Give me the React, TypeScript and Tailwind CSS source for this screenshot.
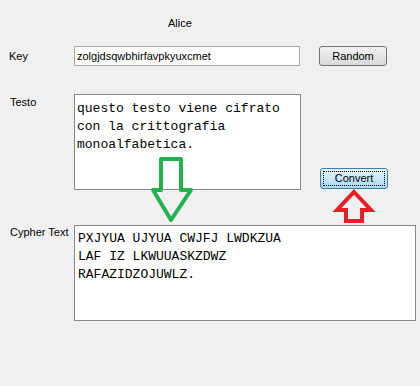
export default function App() {
  return (
    <div className="relative w-[420px] h-[386px] bg-[#f0f0f0] text-[11px] leading-[13px] text-black font-['Liberation_Sans',Arial,sans-serif] overflow-hidden">
      <div className="pt-[17px] pl-[168px] h-[46px]">Alice</div>

      {/* key row */}
      <div className="flex items-center h-[20px]">
        <div className="w-[74px] pl-[9px] pt-[1px]">Key</div>
        <div className="w-[226px] h-[20px] border border-[#a9a9a9] bg-white pl-[2px] leading-[18px]">
          zolgjdsqwbhirfavpkyuxcmet
        </div>
        <button className="ml-[19px] w-[68px] h-[20px] rounded-[3px] border border-[#707070] bg-gradient-to-b from-[#f2f2f2] to-[#d9d9d9] text-[11px] leading-[18px]">
          Random
        </button>
      </div>

      {/* testo row */}
      <div className="flex mt-[28px]">
        <div className="w-[74px] pl-[10px] pt-[2px]">Testo</div>
        <div className="w-[227px] h-[96px] border border-[#828790] bg-white pl-[2px] pt-[5px] font-['Liberation_Mono','Courier_New',monospace] text-[13px] leading-[18px] whitespace-pre">
          {"questo testo viene cifrato\ncon la crittografia\nmonoalfabetica."}
        </div>
        <div className="flex flex-col justify-end ml-[19px] pb-[1px]">
          <button className="relative w-[68px] h-[21px] rounded-[3px] border border-[#3c7fb1] bg-gradient-to-b from-[#eaf6fd] to-[#a7d9f5] text-[11px] leading-[19px]">
            <span className="absolute inset-[2px] border border-dotted border-black" />
            Convert
          </button>
        </div>
      </div>

      {/* cypher row */}
      <div className="flex mt-[35px]">
        <div className="w-[74px] pl-[10px] pt-[1px]">Cypher Text</div>
        <div className="w-[342px] h-[96px] border border-[#828790] bg-white pl-[3px] pt-[4px] font-['Liberation_Mono','Courier_New',monospace] text-[13px] leading-[18px] whitespace-pre">
          {"PXJYUA UJYUA CWJFJ LWDKZUA\nLAF IZ LKWUUASKZDWZ\nRAFAZIDZOJUWLZ."}
        </div>
      </div>

      {/* green arrow */}
      <svg className="absolute left-[140px] top-[150px]" width="70" height="80" viewBox="0 0 70 80">
        <polygon
          points="21,9 41,9 41,40 51,40 31,70 13,40 21,40"
          fill="none"
          stroke="#22b14c"
          strokeWidth="4"
          strokeLinejoin="round"
        />
      </svg>

      {/* red arrow */}
      <svg className="absolute left-[330px] top-[185px]" width="50" height="45" viewBox="0 0 50 45">
        <polygon
          points="24,7 41,25 32,25 32,36 16,36 16,25 7,25"
          fill="none"
          stroke="#ed1c24"
          strokeWidth="4"
          strokeLinejoin="miter"
        />
      </svg>
    </div>
  );
}
